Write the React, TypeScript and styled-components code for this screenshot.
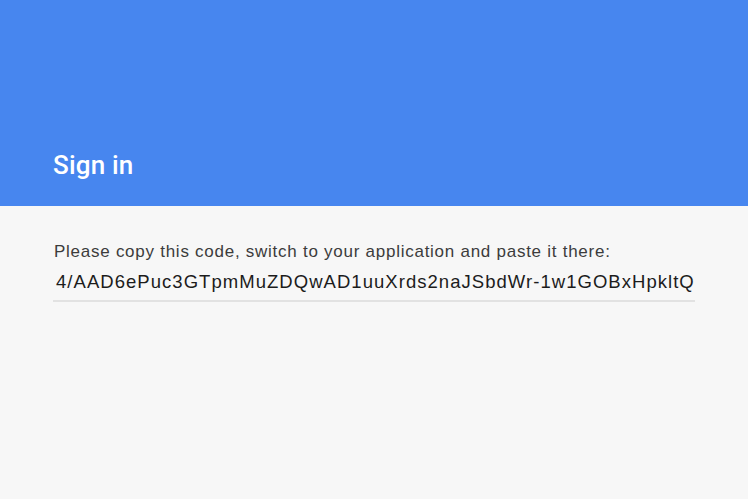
import React from "react";
import styled, { createGlobalStyle } from "styled-components";

const Global = createGlobalStyle`
  html, body { margin: 0; padding: 0; background: #f7f7f7; }
  body { font-family: Roboto, "Liberation Sans", sans-serif; }
`;

const Page = styled.div`
  width: 748px;
  height: 499px;
  background: #f7f7f7;
  display: flex;
  flex-direction: column;
`;

const Header = styled.header`
  height: 206px;
  background: #4786ef;
  display: flex;
  align-items: flex-end;
  padding: 0 0 26px 53px;
  box-sizing: border-box;
`;

const Title = styled.h1`
  margin: 0;
  font-family: Roboto, "Liberation Sans", sans-serif;
  font-weight: 500;
  font-size: 26px;
  line-height: 30px;
  letter-spacing: 0.2px;
  color: #ffffff;
`;

const Body = styled.main`
  padding: 36px 0 0 54px;
  display: flex;
  flex-direction: column;
`;

const Prompt = styled.p`
  margin: 0;
  font-family: "Liberation Sans", Arial, sans-serif;
  font-size: 17px;
  line-height: 20px;
  letter-spacing: 0.74px;
  color: #3c3c3c;
`;

const Code = styled.div`
  width: 642px;
  margin: 8px 0 0 -1px;
  padding: 1px 0 7px 3px;
  box-sizing: border-box;
  border-bottom: 2px solid #e2e2e2;
  font-family: "Liberation Sans", Arial, sans-serif;
  font-size: 18.5px;
  line-height: 22px;
  letter-spacing: 1.04px;
  color: #1c1c1c;
  white-space: nowrap;
`;

export default function App() {
  return (
    <>
      <Global />
      <Page>
        <Header>
          <Title>Sign in</Title>
        </Header>
        <Body>
          <Prompt>Please copy this code, switch to your application and paste it there:</Prompt>
          <Code>4/AAD6ePuc3GTpmMuZDQwAD1uuXrds2naJSbdWr-1w1GOBxHpkltQ</Code>
        </Body>
      </Page>
    </>
  );
}
